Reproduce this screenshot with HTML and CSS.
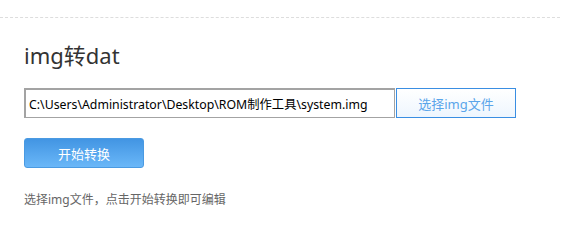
FILE: index.html
```html
<!DOCTYPE html>
<html lang="zh-CN">
<head>
  <meta charset="UTF-8" />
  <title>img转dat</title>
  <link rel="stylesheet" href="styles.css">
</head>
<body>

<div class="divider"></div>

<div class="panel">
  <h2 class="panel-title">img转dat</h2>

  <div class="file-row">
    <input class="file-path" type="text" value="C:\Users\Administrator\Desktop\ROM制作工具\system.img" />
    <button class="btn-choose">选择img文件</button>
  </div>

  <button class="btn-start">开始转换</button>

  <p class="hint">选择img文件，点击开始转换即可编辑</p>
</div>

</body>
</html>
```

FILE: styles.css
```css
body {
  font-family: "Noto Sans", "Noto Sans CJK SC", sans-serif;
  background: #fff;
  color: #333;
  margin: 0;
  padding: 17px 0 0;
}
.divider {
  border-top: 1px dashed #ddd;
  margin-right: 3px;
}
.panel {
  padding: 0 24px;
}
.panel-title {
  font-size: 22px;
  font-weight: normal;
  color: #333;
  margin: 22px 0 18px;
  line-height: 30px;
}
.file-row {
  display: flex;
  align-items: stretch;
  height: 30px;
}
.file-path {
  width: 371px;
  box-sizing: border-box;
  border: 2px solid #a3a3a3;
  border-right-width: 1px;
  border-bottom-width: 1px;
  padding: 0 3px;
  font-family: inherit;
  font-size: 12.3px;
  color: #000;
  outline: none;
}
.btn-choose {
  width: 120px;
  margin-left: 1px;
  border: 1px solid #3a8ee2;
  background: linear-gradient(#fff, #eef6fe);
  color: #5aa5ea;
  font-family: inherit;
  font-size: 13px;
  cursor: pointer;
}
.btn-start {
  display: block;
  width: 120px;
  height: 30px;
  margin-top: 20px;
  border: 1px solid #4a9ae2;
  border-radius: 3px;
  background: linear-gradient(#4295e3, #6ab7f8);
  color: #fff;
  font-family: inherit;
  font-size: 13px;
  cursor: pointer;
}
.hint {
  font-size: 12px;
  color: #666;
  margin: 22px 0 0;
}
```
